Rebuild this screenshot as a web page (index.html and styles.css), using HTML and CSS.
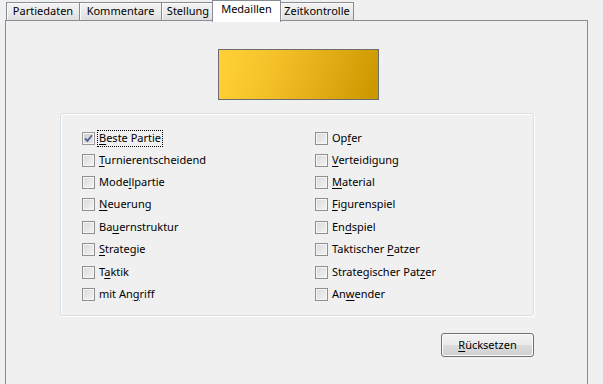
FILE: index.html
```html
<!DOCTYPE html>
<html lang="de">
<head>
<meta charset="utf-8">
<title>Medaillen</title>
<link rel="stylesheet" href="styles.css">
</head>
<body>
<div class="window">
  <div class="tabs">
    <div class="tab tab-p">Partiedaten</div>
    <div class="tab tab-k">Kommentare</div>
    <div class="tab tab-s">Stellung</div>
    <div class="tab tab-m active">Medaillen</div>
    <div class="tab tab-z">Zeitkontrolle</div>
  </div>
  <div class="pane">
    <div class="column">
      <div class="medal"></div>
      <div class="group">
        <label class="opt"><span class="cb checked"><svg width="13" height="13" viewBox="0 0 13 13"><path d="M3 6.3 L5.4 8.9 L10 3.2" fill="none" stroke="#4a5f9e" stroke-width="1.7"/></svg></span><span class="txt focus"><u>B</u>este Partie</span></label>
        <label class="opt"><span class="cb"></span><span class="txt"><u>T</u>urnierentscheidend</span></label>
        <label class="opt"><span class="cb"></span><span class="txt">Mode<u>l</u>lpartie</span></label>
        <label class="opt"><span class="cb"></span><span class="txt"><u>N</u>euerung</span></label>
        <label class="opt"><span class="cb"></span><span class="txt">Ba<u>u</u>ernstruktur</span></label>
        <label class="opt"><span class="cb"></span><span class="txt"><u>S</u>trategie</span></label>
        <label class="opt"><span class="cb"></span><span class="txt">T<u>a</u>ktik</span></label>
        <label class="opt"><span class="cb"></span><span class="txt">mit An<u>g</u>riff</span></label>
        <label class="opt"><span class="cb"></span><span class="txt">Op<u>f</u>er</span></label>
        <label class="opt"><span class="cb"></span><span class="txt"><u>V</u>erteidigung</span></label>
        <label class="opt"><span class="cb"></span><span class="txt"><u>M</u>aterial</span></label>
        <label class="opt"><span class="cb"></span><span class="txt"><u>F</u>igurenspiel</span></label>
        <label class="opt"><span class="cb"></span><span class="txt">En<u>d</u>spiel</span></label>
        <label class="opt"><span class="cb"></span><span class="txt">Taktischer <u>P</u>atzer</span></label>
        <label class="opt"><span class="cb"></span><span class="txt">Strategischer Pat<u>z</u>er</span></label>
        <label class="opt"><span class="cb"></span><span class="txt">An<u>w</u>ender</span></label>
      </div>
      <div class="actions">
        <button class="btn" type="button"><u>R</u>ücksetzen</button>
      </div>
    </div>
  </div>
</div>
</body>
</html>
```
FILE: styles.css
```css
* { box-sizing: border-box; }
html, body {
  margin: 0;
  padding: 0;
  background: #f0f0f0;
  width: 603px;
  height: 384px;
  overflow: hidden;
  font-family: "Noto Sans", "Open Sans", sans-serif;
  font-size: 11px;
  color: #000;
}
.window {
  width: 603px;
  height: 384px;
  overflow: hidden;
}
.tabs {
  display: flex;
  align-items: flex-start;
  height: 20px;
  padding-left: 6px;
}
.tab {
  height: 18px;
  margin-top: 2px;
  margin-right: -1px;
  border: 1px solid #898c95;
  border-bottom: none;
  background: linear-gradient(#f3f3f3, #ebebeb 50%, #dedede);
  box-shadow: inset 1px 1px 0 #fbfbfb;
  display: flex;
  align-items: center;
  justify-content: center;
  line-height: 14px;
  padding-bottom: 1px;
  white-space: nowrap;
}
.tab-p { width: 74px; }
.tab-k { width: 83px; }
.tab-s { width: 54px; }
.tab-m { width: 69px; }
.tab-z { width: 74px; }
.tab.active {
  position: relative;
  z-index: 2;
  margin-top: 0;
  margin-left: -2px;
  height: 22px;
  background: #fff;
  box-shadow: none;
  align-items: flex-start;
  padding-top: 1px;
}
.pane {
  margin-left: 5px;
  width: 583px;
  height: 400px;
  border: 1px solid #898c95;
  background: #f0f0f0;
  padding-top: 28px;
  padding-left: 54px;
}
.column {
  width: 474px;
  display: flex;
  flex-direction: column;
}
.medal {
  margin-left: 158px;
  width: 161px;
  height: 51px;
  border: 1px solid #6b6b70;
  background: linear-gradient(108deg, #ffd036 4%, #f3c028 35%, #e2ac17 65%, #cc9a00 95%);
}
.group {
  margin-top: 13px;
  width: 474px;
  height: 203px;
  border: 1px solid #d5dfe5;
  border-radius: 3px;
  box-shadow: inset 1px 1px 0 #fff, 1px 1px 0 #fff;
  padding: 13px 0 0 21px;
  display: grid;
  grid-auto-flow: column;
  grid-template-columns: 233px 233px;
  grid-template-rows: 22px 22px 22px 23px 22px 23px 22px 22px;
}
.opt {
  display: flex;
  align-items: center;
  height: 22px;
}
.cb {
  flex: none;
  width: 13px;
  height: 13px;
  border: 1px solid #8e8f8f;
  background: linear-gradient(135deg, #d9d9d9, #f4f4f4);
  box-shadow: inset 0 0 0 1px #f6f6f6;
  position: relative;
}
.cb.checked {
  border-color: #9a9a9a;
  background: linear-gradient(135deg, #cfcfcf, #e6e6e6);
}
.cb svg {
  position: absolute;
  left: -1px;
  top: -1px;
}
.txt {
  margin-left: 2px;
  border: 1px dotted transparent;
  padding: 0 1px 1px 1px;
  line-height: 14px;
  white-space: nowrap;
}
.txt.focus {
  border-color: #000;
}
u {
  text-decoration: underline;
  text-underline-offset: 2px;
}
.actions {
  display: flex;
  justify-content: flex-end;
  margin-top: 17px;
}
.btn {
  width: 93px;
  height: 24px;
  border: 1px solid #707070;
  border-radius: 3px;
  background: linear-gradient(#f2f2f2, #ebebeb 50%, #dddddd 51%, #cfcfcf);
  box-shadow: inset 0 0 0 1px #fcfcfc;
  font-family: "Noto Sans", "Open Sans", sans-serif;
  font-size: 11px;
  color: #000;
  padding: 0 0 1px 0;
  line-height: 14px;
}
```
